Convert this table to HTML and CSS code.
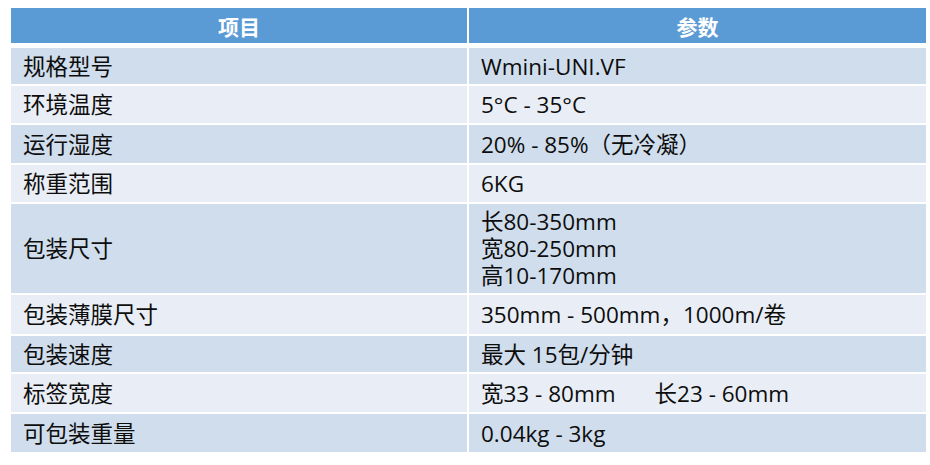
FILE: index.html
```html
<!DOCTYPE html>
<html lang="zh-CN">
<head>
<meta charset="utf-8">
<title>参数表</title>
<link rel="stylesheet" href="styles.css">
</head>
<body>
<div class="spec">
  <div class="head">
    <div class="hcell">项目</div>
    <div class="hcell">参数</div>
  </div>
  <div class="body">
    <div class="cell odd">规格型号</div><div class="cell odd">Wmini-UNI.VF</div>
    <div class="cell even">环境温度</div><div class="cell even">5°C - 35°C</div>
    <div class="cell odd">运行湿度</div><div class="cell odd">20% - 85%（无冷凝）</div>
    <div class="cell even">称重范围</div><div class="cell even">6KG</div>
    <div class="cell odd">包装尺寸</div><div class="cell odd multi"><span>长80-350mm</span><span>宽80-250mm</span><span>高10-170mm</span></div>
    <div class="cell even">包装薄膜尺寸</div><div class="cell even">350mm - 500mm，1000m/卷</div>
    <div class="cell odd">包装速度</div><div class="cell odd">最大 15包/分钟</div>
    <div class="cell even">标签宽度</div><div class="cell even"><span class="w">宽33 - 80mm</span><span>长23 - 60mm</span></div>
    <div class="cell odd">可包装重量</div><div class="cell odd">0.04kg - 3kg</div>
  </div>
</div>
</body>
</html>
```
FILE: styles.css
```css
html, body {
  margin: 0;
  padding: 0;
  background: #ffffff;
}
body {
  font-family: "Open Sans", "Noto Sans CJK SC", sans-serif;
  color: #0d0d0d;
  width: 930px;
  height: 465px;
  overflow: hidden;
}
.spec {
  margin: 8px 0 0 11px;
  width: 915px;
}
.head {
  display: grid;
  grid-template-columns: 456px 457px;
  column-gap: 2px;
  height: 35px;
  margin-bottom: 5px;
}
.hcell {
  background: #5b9bd5;
  color: #ffffff;
  font-weight: 700;
  font-size: 21px;
  display: flex;
  align-items: center;
  justify-content: center;
  font-family: "Noto Sans CJK SC", sans-serif;
}
.body {
  display: grid;
  grid-template-columns: 456px 457px;
  grid-template-rows: 36px 37px 38px 37px 89px 39px 36px 38px 38px;
  gap: 2px;
}
.cell {
  display: flex;
  align-items: center;
  padding-left: 12px;
  font-size: 22.5px;
  line-height: 27px;
}
.odd { background: #d0ddec; }
.even { background: #e9eef6; }
.multi {
  flex-direction: column;
  align-items: flex-start;
  justify-content: center;
}
.w { margin-right: 39px; }
```
